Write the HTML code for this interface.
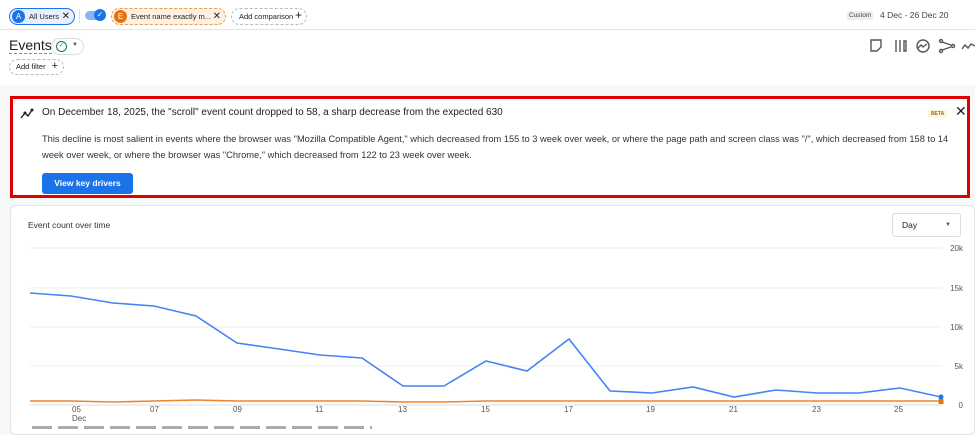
<!DOCTYPE html>
<html><head><meta charset="utf-8"><style>
*{box-sizing:border-box;margin:0;padding:0}
body{width:975px;height:429px;overflow:hidden;background:#f6f8fa;font-family:"Liberation Sans",Arial,sans-serif;color:#202124;position:relative}
.top{position:absolute;left:0;top:0;width:975px;height:30px;background:#fff;border-bottom:1px solid #e3e3e3}
.chip{position:absolute;top:8px;height:17px;border-radius:9px;font-size:7.5px;line-height:15px;padding-left:19px;white-space:nowrap;overflow:hidden}
.av{position:absolute;left:2px;top:1px;width:13px;height:13px;border-radius:50%;color:#fff;font-size:8px;text-align:center;line-height:13px}
.x{position:absolute;right:4px;top:0;font-size:10px}
.hdr{position:absolute;left:0;top:30px;width:975px;height:55px;background:#fff}
.alert{position:absolute;left:10px;top:96px;width:960px;height:102px;background:#fff;border:3px solid #e00000}
.card{position:absolute;left:10px;top:205px;width:965px;height:230px;background:#fff;border:1px solid #e4e4e4;border-radius:6px}
.ylab{position:absolute;right:12px;font-size:8px;color:#555}
.xlab{position:absolute;font-size:8px;color:#555;top:405px}
</style></head><body>
<div class="top">
 <div class="chip" style="left:9px;width:66px;background:#e8f0fe;border:1px solid #1a73e8"><span class="av" style="background:#1a73e8">A</span>All Users<span class="x">✕</span></div>
 <div style="position:absolute;left:79px;top:9px;width:1px;height:14px;background:#ddd"></div>
 <div style="position:absolute;left:85px;top:11px;width:18px;height:9px;border-radius:5px;background:#8ab4f8"></div>
 <div style="position:absolute;left:94px;top:9px;width:12px;height:12px;border-radius:50%;background:#1a73e8;color:#fff;font-size:8px;text-align:center;line-height:12px">✓</div>
 <div class="chip" style="left:111px;width:115px;background:#fef1e4;border:1px dashed #f29a4a"><span class="av" style="background:#e8710a">E</span>Event name exactly m...<span class="x">✕</span></div>
 <div class="chip" style="left:231px;width:76px;background:#fff;border:1px dashed #bbb;padding-left:7px">Add comparison<span style="font-size:12px;position:absolute;right:4px;top:-1px">+</span></div>
 <div style="position:absolute;left:847px;top:11px;font-size:6.5px;background:#eee;padding:1px 2px;color:#444">Custom</div>
 <div style="position:absolute;left:880px;top:10px;font-size:8.5px;color:#444;white-space:nowrap">4 Dec - 26 Dec 20</div>
</div>
<div class="hdr">
 <div style="position:absolute;left:9px;top:8px;font-size:14px;border-bottom:1px dashed #888;line-height:15px">Events</div>
 <div style="position:absolute;left:51px;top:8px;width:33px;height:17px;border:1px solid #ddd;border-radius:9px;background:#fff"><span style="position:absolute;left:4px;top:2px;width:11px;height:11px;border:1.5px solid #188038;border-radius:50%;color:#188038;font-size:7px;line-height:8px;text-align:center">✓</span><span style="position:absolute;left:20px;top:3px;font-size:6px;color:#555">▼</span></div>
 <div style="position:absolute;left:9px;top:29px;width:55px;height:16px;border:1px dashed #bbb;border-radius:8px;font-size:7.5px;line-height:14px;padding-left:6px">Add filter <span style="font-size:11px;position:absolute;right:5px;top:-1px">+</span></div>
 <svg style="position:absolute;left:868px;top:8px" width="107" height="16" fill="none" stroke="#555" stroke-width="1.4">
  <path d="M3 2h10v7l-4 4H3z"/>
  <path d="M28 2v12M32 2v12M36 3h2v10h-2z"/>
  <circle cx="55" cy="8" r="6"/><path d="M50 10l3-3 2 2 4-3"/>
  <circle cx="85" cy="8" r="1.5"/><circle cx="73" cy="3" r="1.5"/><circle cx="73" cy="13" r="1.5"/><path d="M83 7l-9-3M83 9l-9 3"/>
  <path d="M94 11l3-4 3 3 3-4 4 2"/>
 </svg>
</div>
<div class="alert">
 <svg style="position:absolute;left:7px;top:9px" width="14" height="11" fill="none" stroke="#222" stroke-width="1.4"><path d="M1 10l4-5 3 3 4-6"/><circle cx="5" cy="5" r="0.8" fill="#222"/><circle cx="12" cy="2" r="0.8" fill="#222"/></svg>
 <div style="position:absolute;left:29px;top:8px;font-size:10px">On December 18, 2025, the "scroll" event count dropped to 58, a sharp decrease from the expected 630</div>
 <div style="position:absolute;left:915px;top:11px;font-size:5px;background:#fef7e0;color:#a56c00;padding:1px 3px;font-weight:bold">BETA</div>
 <div style="position:absolute;left:942px;top:4px;font-size:14px">✕</div>
 <div style="position:absolute;left:29px;top:32px;width:925px;font-size:9.3px;line-height:16px;color:#333">This decline is most salient in events where the browser was "Mozilla Compatible Agent," which decreased from 155 to 3 week over week, or where the page path and screen class was "/", which decreased from 158 to 14 week over week, or where the browser was "Chrome," which decreased from 122 to 23 week over week.</div>
 <div style="position:absolute;left:29px;top:74px;width:91px;height:21px;background:#1a73e8;border-radius:3px;color:#fff;font-size:8.5px;font-weight:bold;text-align:center;line-height:21px">View key drivers</div>
</div>
<div class="card"></div>
<div style="position:absolute;left:28px;top:220px;font-size:8.5px;color:#333">Event count over time</div>
<div style="position:absolute;left:892px;top:213px;width:69px;height:24px;border:1px solid #ddd;border-radius:3px;font-size:8.5px;line-height:22px;padding-left:9px;background:#fff">Day<span style="position:absolute;right:9px;font-size:6px;color:#555">▼</span></div>
<svg style="position:absolute;left:0;top:0" width="975" height="429">
 <g stroke="#eee" stroke-width="1"><path d="M30 248H942M30 288H942M30 327H942M30 366H942"/></g>
 <path d="M30 405H942" stroke="#ddd"/>
 <polyline fill="none" stroke="#f0842c" stroke-width="1.6" points="30,401 71,401 113,402 154,401 196,400 237,401 279,401 320,401 362,401 403,402 444,402 486,401 527,401 569,401 610,401 652,401 693,401 734,401 776,401 817,401 859,401 900,401 941,401"/>
 <polyline fill="none" stroke="#4285f4" stroke-width="1.6" points="30,293 71,296 113,303 154,306 196,316 237,343 279,349 320,355 362,358 403,386 444,386 486,361 527,371 569,339 610,391 652,393 693,387 734,397 776,390 817,393 859,393 900,388 941,397"/>
 <circle cx="941" cy="397" r="2.5" fill="#1a73e8"/><rect x="938.5" y="399" width="5" height="5" fill="#e8710a"/>
</svg>
<div class="ylab" style="top:244px">20k</div><div class="ylab" style="top:284px">15k</div><div class="ylab" style="top:323px">10k</div><div class="ylab" style="top:362px">5k</div><div class="ylab" style="top:401px">0</div>
<div class="xlab" style="left:72px">05<br>Dec</div><div class="xlab" style="left:150px">07</div><div class="xlab" style="left:233px">09</div><div class="xlab" style="left:315px">11</div><div class="xlab" style="left:398px">13</div><div class="xlab" style="left:481px">15</div><div class="xlab" style="left:564px">17</div><div class="xlab" style="left:646px">19</div><div class="xlab" style="left:729px">21</div><div class="xlab" style="left:812px">23</div><div class="xlab" style="left:894px">25</div>
<div style="position:absolute;left:32px;top:426px;width:340px;height:3px;background:repeating-linear-gradient(90deg,#aaa 0 20px,transparent 20px 26px)"></div>
</body></html>
